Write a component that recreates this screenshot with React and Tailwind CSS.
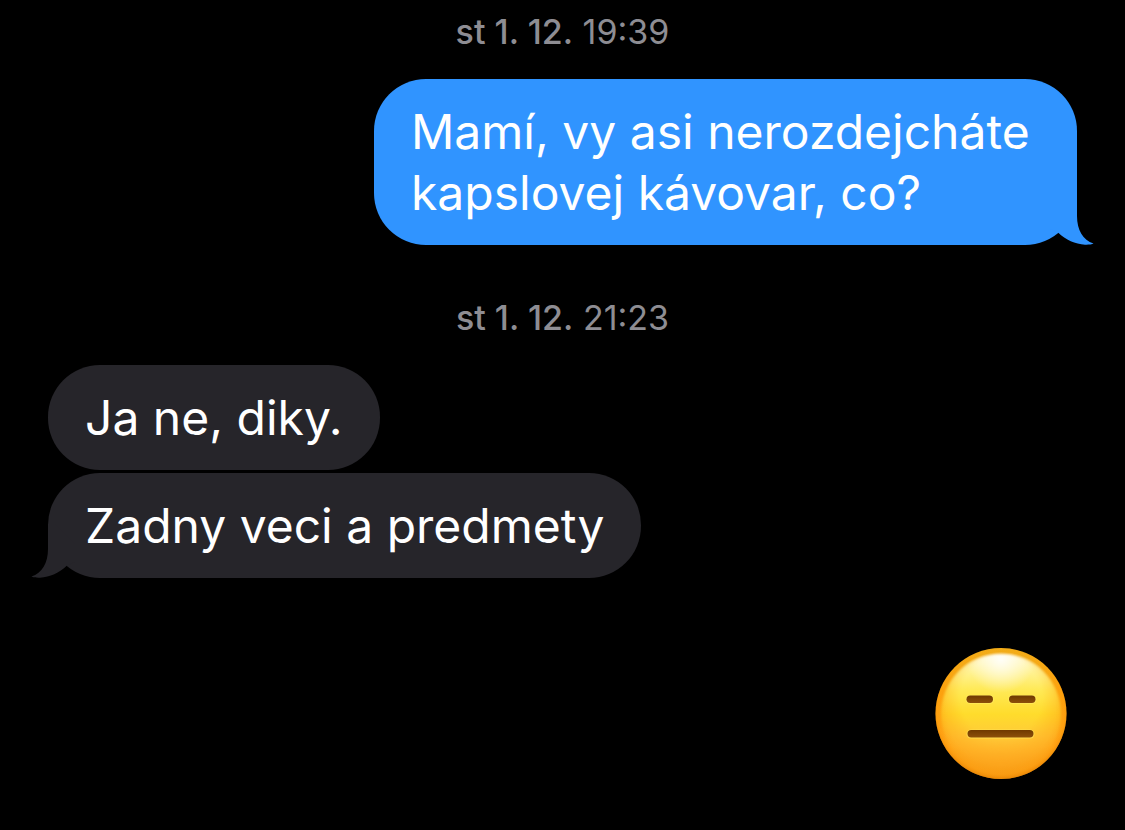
const conversation = [
    {
        day: 'st 1. 12.',
        time: '19:39',
        messages: [{ text: 'Mamí, vy asi nerozdejcháte kapslovej kávovar, co?', sent: true, tail: true }],
    },
    {
        day: 'st 1. 12.',
        time: '21:23',
        messages: [
            { text: 'Ja ne, diky.' },
            { text: 'Zadny veci a predmety', tail: true },
        ],
    },
];

function Tail({ sent }) {
    return (
        <svg
            viewBox="0 -8 44 54"
            className={
                sent
                    ? 'absolute -right-[17px] bottom-0 h-[54px] w-[44px] text-[#3094ff]'
                    : 'absolute -left-[17px] bottom-0 h-[54px] w-[44px] -scale-x-100 text-[#26252a]'
            }
            aria-hidden="true"
        >
            <path
                d="M20 -8H27V17C27 31 33 41 43.5 44.6C42 45.6 38 45.8 35 45.7C25 45 16 41 8 33.5L0 30V12Z"
                fill="currentColor"
            />
        </svg>
    );
}

function Bubble({ text, sent, tail }) {
    return (
        <div
            className={
                sent
                    ? 'relative max-w-[703px] self-end rounded-[52px] bg-[#3094ff] py-[22px] pr-7 pl-[37px]'
                    : 'relative max-w-[703px] self-start rounded-[52px] bg-[#26252a] px-[37px] py-[22px]'
            }
        >
            {tail && <Tail sent={sent} />}
            <p className="relative text-[48px] leading-[61px] text-white">{text}</p>
        </div>
    );
}

function ExpressionlessFace() {
    return (
        <svg viewBox="0 0 132 132" className="h-[132px] w-[132px]" role="img" aria-label="😑">
            <defs>
                <linearGradient id="base" x1="0" y1="0" x2="0" y2="1">
                    <stop offset="0" stopColor="#f0b01c" />
                    <stop offset="0.35" stopColor="#fda310" />
                    <stop offset="0.75" stopColor="#ffa51a" />
                    <stop offset="1" stopColor="#f79c16" />
                </linearGradient>
                <linearGradient id="shine" x1="0" y1="0" x2="0" y2="1">
                    <stop offset="0" stopColor="#fff9d0" />
                    <stop offset="0.14" stopColor="#fff39c" />
                    <stop offset="0.3" stopColor="#ffea58" />
                    <stop offset="0.5" stopColor="#ffdc2c" />
                    <stop offset="0.68" stopColor="#ffca38" />
                    <stop offset="0.85" stopColor="#ffb42a" />
                    <stop offset="1" stopColor="#ffa51c" />
                </linearGradient>
                <radialGradient id="glow" gradientUnits="userSpaceOnUse" cx="66" cy="12" r="34">
                    <stop offset="0" stopColor="#ffffff" stopOpacity="0.9" />
                    <stop offset="1" stopColor="#ffffff" stopOpacity="0" />
                </radialGradient>
                <radialGradient id="edge" cx="0.5" cy="0.48" r="0.52">
                    <stop offset="0.8" stopColor="#ff9500" stopOpacity="0" />
                    <stop offset="0.93" stopColor="#ff9500" stopOpacity="0.2" />
                    <stop offset="1" stopColor="#e07c00" stopOpacity="0.7" />
                </radialGradient>
                <radialGradient id="fade" gradientUnits="userSpaceOnUse" cx="66" cy="50" r="74">
                    <stop offset="0.55" stopColor="#ffffff" />
                    <stop offset="0.85" stopColor="#ffffff" stopOpacity="0.5" />
                    <stop offset="1" stopColor="#ffffff" stopOpacity="0.2" />
                </radialGradient>
                <filter id="blur">
                    <feGaussianBlur stdDeviation="1" />
                </filter>
                <mask id="soft">
                    <ellipse cx="66" cy="67" rx="60" ry="60.5" fill="url(#fade)" filter="url(#blur)" />
                </mask>
                <linearGradient id="feature" x1="0" y1="0" x2="0" y2="1">
                    <stop offset="0" stopColor="#6f3900" />
                    <stop offset="1" stopColor="#8d500a" />
                </linearGradient>
            </defs>
            <circle cx="66" cy="66.5" r="65.5" fill="url(#base)" />
            <g mask="url(#soft)">
                <circle cx="66" cy="67" r="62" fill="url(#shine)" />
                <circle cx="66" cy="67" r="62" fill="url(#glow)" />
            </g>
            <circle cx="66" cy="66.5" r="65.5" fill="url(#edge)" />
            <g fill="#fff06a" opacity="0.5">
                <rect x="30.5" y="48" width="28.5" height="9" rx="4.4" />
                <rect x="73" y="48" width="28.5" height="9" rx="4.4" />
                <rect x="31.5" y="82.5" width="68" height="9" rx="4.4" />
            </g>
            <g fill="url(#feature)">
                <rect x="31.5" y="48.5" width="26.5" height="7.5" rx="3.7" />
                <rect x="74" y="48.5" width="26.5" height="7.5" rx="3.7" />
                <rect x="32.5" y="83" width="66" height="7.5" rx="3.7" />
            </g>
        </svg>
    );
}

export default function App() {
    return (
        <main
            lang="cs"
            className="flex min-h-screen flex-col gap-[53px] bg-black px-12 py-3 font-['Inter','Liberation_Sans',sans-serif]"
        >
            {conversation.map((group) => (
                <section key={group.time} className="flex flex-col gap-[27px]">
                    <p className="text-center text-[34px] leading-10 text-[#8e8d93]">
                        <span className="font-medium">{group.day}</span> {group.time}
                    </p>
                    <div className="flex flex-col gap-[3px]">
                        {group.messages.map((message) => (
                            <Bubble key={message.text} {...message} />
                        ))}
                    </div>
                </section>
            ))}

            <div className="mt-4 flex justify-end pr-[10px]">
                <ExpressionlessFace />
            </div>
        </main>
    );
}
